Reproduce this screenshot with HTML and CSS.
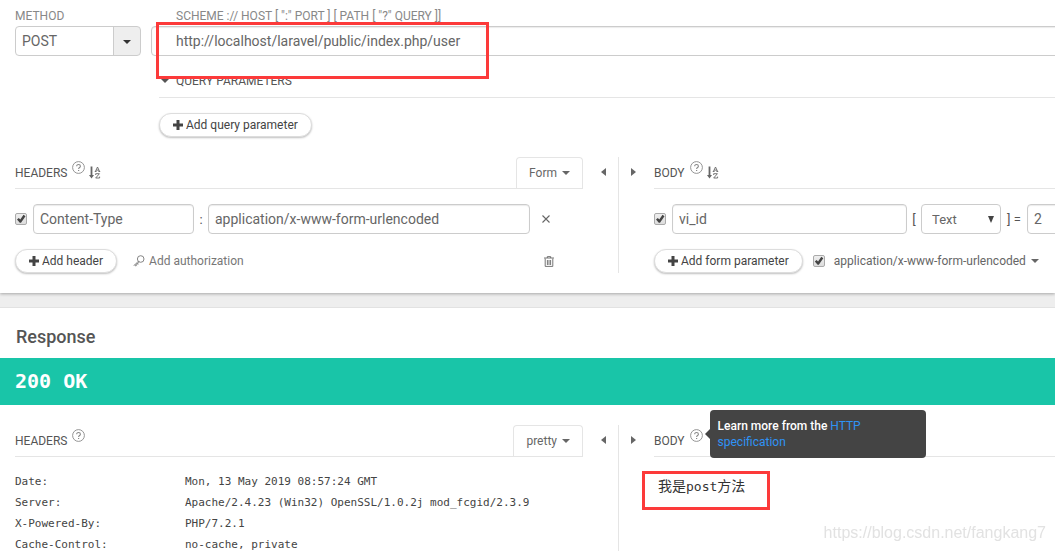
FILE: index.html
```html
<!DOCTYPE html>
<html lang="en">
<head>
  <meta charset="UTF-8" />
  <meta name="viewport" content="width=device-width, initial-scale=1.0"/>
  <title>REST client</title>
  <link rel="stylesheet" href="styles.css">
</head>
<body>
  <!-- Shared icons -->
  <svg class="icon-defs" aria-hidden="true">
    <symbol id="i-plus" viewBox="0 0 10 10"><path d="M3.5 0h3v3.5H10v3H6.5V10h-3V6.5H0v-3h3.5z" fill="currentColor"/></symbol>
    <symbol id="i-caret" viewBox="0 0 8 4"><path d="M0 0h8L4 4z" fill="currentColor"/></symbol>
    <symbol id="i-left" viewBox="0 0 5 8"><path d="M5 0v8L0 4z" fill="currentColor"/></symbol>
    <symbol id="i-right" viewBox="0 0 5 8"><path d="M0 0v8l5-4z" fill="currentColor"/></symbol>
    <symbol id="i-help" viewBox="0 0 13 13">
      <g fill="none" stroke="currentColor">
        <circle cx="6.5" cy="6.5" r="5.9" stroke-width=".9"/>
        <path d="M4.7 5.2c0-2.3 3.7-2.2 3.7 0 0 1.3-1.8 1.3-1.8 2.7" stroke-width="1.1"/>
        <path d="M6.6 8.9v1.2" stroke-width="1.2"/>
      </g>
    </symbol>
    <symbol id="i-sort" viewBox="0 0 12 13">
      <g fill="none" stroke="currentColor">
        <path d="M2.5 0.5v10" stroke-width="1.8"/>
        <path d="M6.4 5.5L8.5 1l2.1 4.5M7.2 4.1h2.800M5.800 5.500h1.800M9.400 5.500h1.800" stroke-width=".9"/>
        <path d="M6.700 9V7.700h3.700L6.700 12h3.900v-1.400" stroke-width=".9"/>
      </g>
      <path d="M0 9h5l-2.500 3.500z" fill="currentColor"/>
    </symbol>
    <symbol id="i-key" viewBox="0 0 12 12">
      <g fill="none" stroke="currentColor" stroke-width=".9">
        <circle cx="7.700" cy="4" r="3.300"/>
        <path d="M5.300 6.300L.8 10.800M6.300 7L2.200 11.100M2 9.500l1.600 1.600M3.600 8l1.500 1.500"/>
      </g>
    </symbol>
    <symbol id="i-trash" viewBox="0 0 10 11">
      <path d="M0 2h10M3.300 2V.6h3.400V2M1.200 2.500v7.900h7.600V2.500M3.400 4v5M5 4v5M6.600 4v5" fill="none" stroke="currentColor" stroke-width=".9"/>
    </symbol>
    <symbol id="i-close" viewBox="0 0 8 8"><path d="M.5.5l7 7M7.500.5l-7 7" fill="none" stroke="currentColor" stroke-width="1.100"/></symbol>
  </svg>

  <main class="page">
    <section class="panel request">
      <div class="target">
        <div class="method">
          <label class="caption" for="method">METHOD</label>
          <select class="field method-select" id="method">
            <option>POST</option>
            <option>GET</option>
            <option>PUT</option>
            <option>DELETE</option>
          </select>
        </div>
        <div class="url">
          <label class="caption url-caption" for="url">SCHEME :// HOST [ ":" PORT ] [ PATH [ "?" QUERY ]]</label>
          <input class="field url-input" type="text" id="url" value="http://localhost/laravel/public/index.php/user">
          <div class="query">
            <h2 class="query-title"><svg class="caret"><use href="#i-caret"/></svg>QUERY PARAMETERS</h2>
            <button class="pill" type="button"><svg class="plus"><use href="#i-plus"/></svg>Add query parameter</button>
          </div>
          <div class="mark mark-url"></div>
        </div>
      </div>

      <div class="split">
        <div class="pane">
          <div class="pane-head">
            <h2 class="pane-title">HEADERS</h2>
            <button class="help" type="button" aria-label="Help"><svg><use href="#i-help"/></svg></button>
            <button class="sort" type="button" aria-label="Sort headers"><svg><use href="#i-sort"/></svg></button>
            <button class="tab" type="button">Form<svg class="caret"><use href="#i-caret"/></svg></button>
          </div>
          <div class="row">
            <input class="check" type="checkbox" aria-label="Enable header" checked>
            <input class="field header-name" type="text" aria-label="Header name" value="Content-Type">
            <span class="sign">:</span>
            <input class="field header-value" type="text" aria-label="Header value" value="application/x-www-form-urlencoded">
            <button class="remove" type="button" aria-label="Remove header"><svg><use href="#i-close"/></svg></button>
          </div>
          <div class="actions">
            <button class="pill" type="button"><svg class="plus"><use href="#i-plus"/></svg>Add header</button>
            <button class="link-button" type="button"><svg class="key"><use href="#i-key"/></svg>Add authorization</button>
            <button class="trash" type="button" aria-label="Delete all headers"><svg><use href="#i-trash"/></svg></button>
          </div>
        </div>
        <div class="toggle"><button type="button" aria-label="Collapse left"><svg><use href="#i-left"/></svg></button></div>
        <div class="toggle toggle-right"><button type="button" aria-label="Collapse right"><svg><use href="#i-right"/></svg></button></div>
        <div class="pane">
          <div class="pane-head">
            <h2 class="pane-title">BODY</h2>
            <button class="help" type="button" aria-label="Help"><svg><use href="#i-help"/></svg></button>
            <button class="sort" type="button" aria-label="Sort parameters"><svg><use href="#i-sort"/></svg></button>
          </div>
          <div class="row">
            <input class="check" type="checkbox" aria-label="Enable parameter" checked>
            <input class="field param-name" type="text" aria-label="Parameter name" value="vi_id">
            <span class="sign">[</span>
            <select class="field type-select" aria-label="Parameter type">
              <option>Text</option>
              <option>File</option>
            </select>
            <span class="sign sign-wide">] =</span>
            <input class="field param-value" type="text" aria-label="Parameter value" value="2">
          </div>
          <div class="actions">
            <button class="pill" type="button"><svg class="plus"><use href="#i-plus"/></svg>Add form parameter</button>
            <input class="check encoding-check" type="checkbox" aria-label="Set content type" checked>
            <button class="encoding" type="button">application/x-www-form-urlencoded<svg class="caret"><use href="#i-caret"/></svg></button>
          </div>
        </div>
      </div>
    </section>

    <section class="panel response">
      <h1 class="response-title">Response</h1>
      <div class="status">200 OK</div>
      <div class="split">
        <div class="pane">
          <div class="pane-head">
            <h2 class="pane-title">HEADERS</h2>
            <button class="help" type="button" aria-label="Help"><svg><use href="#i-help"/></svg></button>
            <button class="tab" type="button">pretty<svg class="caret"><use href="#i-caret"/></svg></button>
          </div>
          <table class="headers">
            <tr><th scope="row">Date:</th><td>Mon, 13 May 2019 08:57:24 GMT</td></tr>
            <tr><th scope="row">Server:</th><td>Apache/2.4.23 (Win32) OpenSSL/1.0.2j mod_fcgid/2.3.9</td></tr>
            <tr><th scope="row">X-Powered-By:</th><td>PHP/7.2.1</td></tr>
            <tr><th scope="row">Cache-Control:</th><td>no-cache, private</td></tr>
          </table>
        </div>
        <div class="toggle"><button type="button" aria-label="Collapse left"><svg><use href="#i-left"/></svg></button></div>
        <div class="toggle toggle-right"><button type="button" aria-label="Collapse right"><svg><use href="#i-right"/></svg></button></div>
        <div class="pane">
          <div class="pane-head">
            <h2 class="pane-title">BODY</h2>
            <div class="help-wrap">
              <button class="help" type="button" aria-label="Help"><svg><use href="#i-help"/></svg></button>
              <div class="tooltip" role="tooltip">Learn more from the <a href="#">HTTP specification</a></div>
            </div>
          </div>
          <div class="body-text">
            我是<span class="latin">post</span>方法
            <div class="mark mark-body"></div>
          </div>
        </div>
      </div>
    </section>
  </main>

  <div class="watermark">https://blog.csdn.net/fangkang7</div>
</body>
</html>
```
FILE: styles.css
```css
* {
  box-sizing: border-box;
}

body {
  margin: 0;
  overflow: hidden;
  background-color: #eee;
  color: #555;
  font-family: Roboto, sans-serif;
  font-size: 13px;
}

h1, h2 {
  margin: 0;
  font-weight: normal;
}

button {
  padding: 0;
  border: none;
  background: none;
  color: #666;
  font-family: inherit;
  font-size: 12px;
  cursor: pointer;
}

svg {
  display: block;
  flex: none;
}

.icon-defs {
  position: absolute;
  width: 0;
  height: 0;
}

.page {
  display: flex;
  flex-direction: column;
  min-height: 100vh;
}

.panel {
  background-color: #fff;
  overflow: hidden;
}

.request {
  flex: none;
  padding: 8px 0 20px 0;
  box-shadow: 0 1px 3px rgba(0, 0, 0, 0.3);
}

.response {
  flex: 1;
  margin-top: 14px;
  border-top: 1px solid #e2e2e2;
}

/* Fields */
.field {
  height: 30px;
  padding: 0 6px 1px 6px;
  border: 1px solid #ccc;
  border-radius: 4px;
  outline: none;
  background-color: #fff;
  box-shadow: inset 0 1px 1px rgba(0, 0, 0, 0.08);
  color: #666;
  font-family: inherit;
  font-size: 14px;
}

select.field {
  appearance: none;
  box-shadow: none;
}

.check {
  appearance: none;
  flex: none;
  width: 12px;
  height: 12px;
  margin: 0;
  border: 1px solid #aaa;
  border-radius: 2px;
  background: linear-gradient(#eee, #ddd);
}

.check:checked::before {
  content: "";
  display: block;
  width: 10px;
  height: 10px;
  background-color: #444;
  clip-path: polygon(10% 55%, 28% 40%, 43% 55%, 75% 8%, 95% 22%, 50% 88%, 38% 88%);
}

.caret {
  width: 8px;
  height: 4px;
}

/* Method and url */
.target {
  display: flex;
  gap: 10px;
  padding-left: 15px;
}

.method {
  flex: none;
  width: 126px;
}

.url {
  position: relative;
  flex: 1;
}

.caption {
  display: block;
  margin-bottom: 2px;
  color: #888;
  font-size: 12px;
  line-height: 16px;
}

.url-caption {
  padding-left: 25px;
}

.method-select {
  display: block;
  width: 100%;
  background-image:
    url("data:image/svg+xml,%3Csvg xmlns='http://www.w3.org/2000/svg' width='8' height='4'%3E%3Cpath d='M0 0h8L4 4z' fill='%23333'/%3E%3C/svg%3E"),
    linear-gradient(to right, #ccc 1px, #eee 1px);
  background-repeat: no-repeat;
  background-position: right 9px top 13px, right top;
  background-size: 8px 4px, 27px 100%;
}

.url-input {
  display: block;
  width: calc(100% + 10px);
  padding-left: 24px;
}

.query {
  margin: 17px 0 0 8px;
}

.query-title {
  display: flex;
  align-items: center;
  gap: 7px;
  padding: 0 0 8px 2px;
  margin-bottom: 15px;
  border-bottom: 1px solid #e5e5e5;
  font-size: 12px;
  line-height: 16px;
}

.pill {
  display: flex;
  align-items: center;
  gap: 3px;
  height: 24px;
  padding: 0 13px;
  border: 1px solid #ddd;
  border-radius: 12px;
  background-color: #fff;
  box-shadow: 0 1px 2px rgba(0, 0, 0, 0.25);
  color: #444;
  white-space: nowrap;
}

.plus {
  width: 10px;
  height: 10px;
}

/* Split panes */
.split {
  display: grid;
  grid-template-columns: minmax(0, 568fr) 35px 36px minmax(0, 401fr);
  margin-top: 20px;
  padding-left: 15px;
}

.pane-head {
  display: flex;
  height: 32px;
  border-bottom: 1px solid #e5e5e5;
}

.pane-title {
  padding-top: 8px;
  font-size: 12px;
  line-height: 16px;
}

.help {
  width: 13px;
  height: 13px;
  margin: 4px 0 0 5px;
  color: #888;
}

.help svg {
  width: 13px;
  height: 13px;
}

.sort {
  height: 13px;
  margin: 9px 0 0 4px;
}

.sort svg {
  width: 12px;
  height: 13px;
}

.tab {
  display: flex;
  align-items: center;
  gap: 5px;
  height: 31px;
  margin-left: auto;
  padding: 0 12px;
  border: 1px solid #e5e5e5;
  border-bottom: none;
  border-radius: 4px 4px 0 0;
}

.toggle-right {
  border-left: 1px solid #e5e5e5;
}

.toggle button {
  display: flex;
  align-items: center;
  height: 30px;
  padding: 0 12px 0 18px;
}

.toggle-right button {
  padding-left: 12px;
}

.toggle svg {
  width: 5px;
  height: 8px;
}

.row, .actions {
  display: flex;
  align-items: center;
  margin-top: 15px;
}

.row .check {
  margin-right: 6px;
}

.sign {
  flex: none;
  width: 14px;
  text-align: center;
}

.sign-wide {
  width: 26px;
}

.header-name {
  flex: 0 1 161px;
  min-width: 0;
}

.header-value {
  flex: 1;
  min-width: 0;
}

.remove {
  flex: none;
  width: 53px;
  padding-left: 12px;
}

.remove svg {
  width: 8px;
  height: 8px;
}

.link-button {
  display: flex;
  align-items: center;
  gap: 4px;
  margin-left: 16px;
  color: #777;
}

.key {
  width: 12px;
  height: 12px;
}

.trash {
  margin: 0 29px 0 auto;
}

.trash svg {
  width: 10px;
  height: 11px;
}

.param-name {
  flex: none;
  width: 235px;
}

.type-select {
  flex: none;
  width: 80px;
  padding: 0 10px;
  background-image: url("data:image/svg+xml,%3Csvg xmlns='http://www.w3.org/2000/svg' width='6' height='7'%3E%3Cpath d='M0 0h6L3 7z' fill='%23444'/%3E%3C/svg%3E");
  background-repeat: no-repeat;
  background-position: right 6px center;
  font-size: 13px;
}

.param-value {
  flex: none;
  width: 235px;
}

.encoding-check {
  margin: 0 9px 0 10px;
}

.encoding {
  display: flex;
  align-items: center;
  gap: 5px;
}

/* Response */
.response-title {
  padding: 17px 16px 9px 16px;
  font-size: 18px;
  font-weight: 500;
  line-height: 24px;
}

.status {
  padding-left: 15px;
  background-color: #19c5a8;
  color: #fff;
  font-family: "DejaVu Sans Mono", monospace;
  font-size: 20px;
  font-weight: bold;
  line-height: 47px;
}

.headers {
  width: 100%;
  margin-top: 14px;
  border-collapse: collapse;
  color: #444;
  font-family: "DejaVu Sans Mono", monospace;
  font-size: 11px;
  line-height: 21px;
}

.headers th, .headers td {
  padding: 0;
  font-weight: normal;
  text-align: left;
  white-space: nowrap;
}

.headers th {
  width: 170px;
}

.help-wrap {
  position: relative;
}

.tooltip {
  position: absolute;
  top: -15px;
  left: 25px;
  width: 216px;
  padding: 8px;
  border-radius: 4px;
  background-color: #444;
  color: #fff;
  font-size: 12px;
  font-weight: 500;
  line-height: 16px;
}

.tooltip::before {
  content: "";
  position: absolute;
  top: 19px;
  left: -5px;
  border: 5px solid transparent;
  border-left: none;
  border-right-color: #444;
}

.tooltip a {
  color: #2f93f5;
  font-weight: normal;
  text-decoration: none;
}

.body-text {
  position: relative;
  margin-top: 19px;
  padding-left: 4px;
  color: #333;
  font-family: "DejaVu Sans Mono", "Noto Sans CJK SC", monospace;
  font-size: 14px;
  line-height: 20px;
}

.latin {
  font-size: 13px;
}

/* Red marker boxes */
.mark {
  position: absolute;
  border: 3px solid #fc3a3a;
  pointer-events: none;
}

.mark-url {
  top: 14px;
  left: 5px;
  width: 333px;
  height: 57px;
}

.mark-body {
  top: -5px;
  left: -12px;
  width: 128px;
  height: 39px;
}

.watermark {
  position: fixed;
  right: 9px;
  bottom: 9px;
  color: #e2e2e2;
  font-family: "Liberation Sans", sans-serif;
  font-size: 16px;
  line-height: 18px;
}
```
